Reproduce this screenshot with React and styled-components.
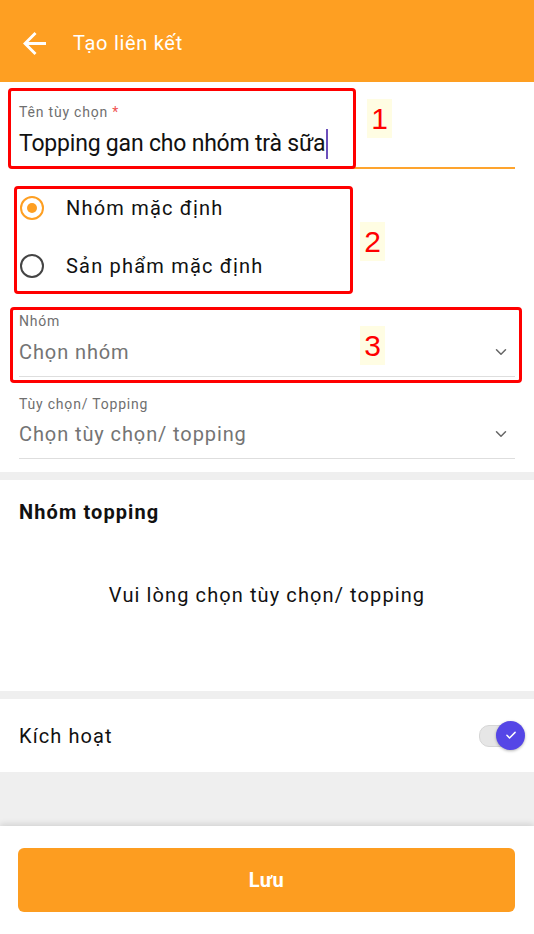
import React from 'react';
import styled, { createGlobalStyle } from 'styled-components';

const GlobalStyle = createGlobalStyle`
  html, body { margin: 0; padding: 0; background: #fff; }
  body { font-family: Roboto, "Noto Sans", Arial, sans-serif; color: #111; }
  * { box-sizing: border-box; }
`;

const Page = styled.div`
  position: relative;
  width: 534px;
  height: 934px;
  display: flex;
  flex-direction: column;
  background: #efefef;
  overflow: hidden;
`;

const Header = styled.div`
  height: 82px;
  background: #fe9f22;
  display: flex;
  align-items: center;
  padding: 4px 0 0 23px;
  gap: 27px;
  color: #fff;
`;

const Title = styled.div`
  font-size: 20px;
  letter-spacing: 0.7px;
  color: #fff;
`;

const Form = styled.div`
  background: #fff;
  padding: 0 19px 13px;
`;

const Field = styled.div`
  position: relative;
  padding-top: ${p => p.$top}px;
  padding-bottom: ${p => p.$bottom}px;
  border-bottom: ${p => (p.$focused ? '2px solid #fea42e' : '1px solid #dedede')};
`;

const Label = styled.div`
  font-size: 14px;
  line-height: 18px;
  letter-spacing: 0.8px;
  color: #6f6f6f;
  span { color: #f0524f; }
`;

const ValueRow = styled.div`
  margin-top: ${p => p.$gap || 8}px;
  display: flex;
  align-items: center;
  justify-content: space-between;
`;

const Value = styled.div`
  font-size: ${p => (p.$big ? 23 : 20)}px;
  line-height: 28px;
  letter-spacing: ${p => (p.$big ? -0.2 : 0.9)}px;
  color: ${p => (p.$placeholder ? '#747474' : '#111')};
  display: flex;
  align-items: center;
`;

const Caret = styled.i`
  display: inline-block;
  width: 2px;
  height: 30px;
  background: #6b4fbb;
  margin-left: 1px;
`;

const RadioGroup = styled.div`
  position: relative;
  margin-top: 10px;
`;

const RadioRow = styled.div`
  height: 58px;
  display: flex;
  align-items: center;
  gap: 22px;
  font-size: 20px;
  letter-spacing: 1.2px;
  color: #111;
`;

const RadioDot = styled.span`
  width: 24px;
  height: 24px;
  border-radius: 50%;
  margin-left: 1px;
  border: 2.5px solid ${p => (p.$on ? '#fe9f22' : '#444')};
  display: flex;
  align-items: center;
  justify-content: center;
  &::after {
    content: '';
    width: 10px;
    height: 10px;
    border-radius: 50%;
    background: ${p => (p.$on ? '#fe9f22' : 'transparent')};
  }
`;

const Band = styled.div`
  height: 8px;
  background: #efefef;
`;

const Section = styled.div`
  background: #fff;
  height: 211px;
  padding: 20px 19px 0;
`;

const SectionTitle = styled.div`
  font-size: 20px;
  font-weight: 700;
  line-height: 24px;
  letter-spacing: 1.1px;
  color: #111;
`;

const Empty = styled.div`
  margin-top: 59px;
  text-align: center;
  font-size: 20px;
  line-height: 24px;
  letter-spacing: 1.1px;
  color: #111;
`;

const ToggleRow = styled.div`
  background: #fff;
  height: 73px;
  padding: 0 9px 0 19px;
  display: flex;
  align-items: center;
  justify-content: space-between;
  font-size: 20px;
  letter-spacing: 1.1px;
  color: #111;
`;

const Switch = styled.div`
  position: relative;
  width: 46px;
  height: 22px;
  display: flex;
  align-items: center;
  &::before {
    content: '';
    width: 36px;
    height: 20px;
    border-radius: 10px;
    background: #e6e6e6;
    border: 1px solid #d6d6d6;
  }
`;

const Thumb = styled.span`
  position: absolute;
  right: 0;
  top: -4px;
  width: 29px;
  height: 29px;
  border-radius: 50%;
  background: #5546e6;
  box-shadow: 0 1px 3px rgba(0, 0, 0, 0.3);
  display: flex;
  align-items: center;
  justify-content: center;
`;

const Filler = styled.div`
  flex: 1;
  background: #efefef;
`;

const Footer = styled.div`
  background: #fff;
  height: 108px;
  padding: 22px 19px 0 18px;
  box-shadow: 0 -2px 6px rgba(0, 0, 0, 0.12);
`;

const SaveButton = styled.button`
  width: 100%;
  height: 64px;
  border: none;
  border-radius: 6px;
  background: #fd9d20;
  color: #fff;
  font-family: Roboto, sans-serif;
  font-size: 20px;
  font-weight: 700;
  letter-spacing: 0.5px;
`;

const Mark = styled.div`
  position: absolute;
  left: ${p => p.$x}px;
  top: ${p => p.$y}px;
  width: ${p => p.$w}px;
  height: ${p => p.$h}px;
  border: 3px solid #ff0000;
  border-radius: 4px;
  pointer-events: none;
`;

const Num = styled.div`
  position: absolute;
  left: ${p => p.$x}px;
  top: ${p => p.$y}px;
  width: 25px;
  height: 39px;
  background: #fffde3;
  color: #f00;
  font-family: "Liberation Sans", Arial, sans-serif;
  font-size: 30px;
  line-height: 39px;
  text-align: center;
`;

const Chevron = () => (
  <svg width="18" height="18" viewBox="0 0 24 24" fill="none" stroke="#666" strokeWidth="2" strokeLinecap="round" strokeLinejoin="round" style={{ marginRight: 5 }}>
    <path d="M6 9l6 6 6-6" />
  </svg>
);

export default function App() {
  return (
    <>
      <GlobalStyle />
      <Page>
        <Header>
          <svg width="23" height="23" viewBox="4 4 16 16" fill="#fff">
            <path d="M20 11H7.83l5.59-5.59L12 4l-8 8 8 8 1.41-1.41L7.83 13H20v-2z" />
          </svg>
          <Title>Tạo liên kết</Title>
        </Header>

        <Form>
          <Field $top={21} $bottom={8} $focused>
            <Label>Tên tùy chọn <span>*</span></Label>
            <ValueRow $gap={8}>
              <Value $big>Topping gan cho nhóm trà sữa<Caret /></Value>
            </ValueRow>
          </Field>

          <RadioGroup>
            <RadioRow><RadioDot $on />Nhóm mặc định</RadioRow>
            <RadioRow><RadioDot />Sản phẩm mặc định</RadioRow>
          </RadioGroup>

          <Field $top={17} $bottom={10}>
            <Label>Nhóm</Label>
            <ValueRow $gap={8}>
              <Value $placeholder>Chọn nhóm</Value>
              <Chevron />
            </ValueRow>
          </Field>

          <Field $top={18} $bottom={10}>
            <Label>Tùy chọn/ Topping</Label>
            <ValueRow $gap={7}>
              <Value $placeholder>Chọn tùy chọn/ topping</Value>
              <Chevron />
            </ValueRow>
          </Field>
        </Form>

        <Band />

        <Section>
          <SectionTitle>Nhóm topping</SectionTitle>
          <Empty>Vui lòng chọn tùy chọn/ topping</Empty>
        </Section>

        <Band />

        <ToggleRow>
          Kích hoạt
          <Switch>
            <Thumb>
              <svg width="14" height="14" viewBox="0 0 24 24" fill="none" stroke="#fff" strokeWidth="2.5" strokeLinecap="round" strokeLinejoin="round">
                <path d="M5 12.5l4.5 4.5L19 7.5" />
              </svg>
            </Thumb>
          </Switch>
        </ToggleRow>

        <Filler />

        <Footer>
          <SaveButton>Lưu</SaveButton>
        </Footer>

        <Mark $x={8} $y={88} $w={348} $h={81} />
        <Num $x={367} $y={99}>1</Num>
        <Mark $x={14} $y={186} $w={339} $h={108} />
        <Num $x={360} $y={222}>2</Num>
        <Mark $x={10} $y={307} $w={512} $h={76} />
        <Num $x={360} $y={326}>3</Num>
      </Page>
    </>
  );
}
